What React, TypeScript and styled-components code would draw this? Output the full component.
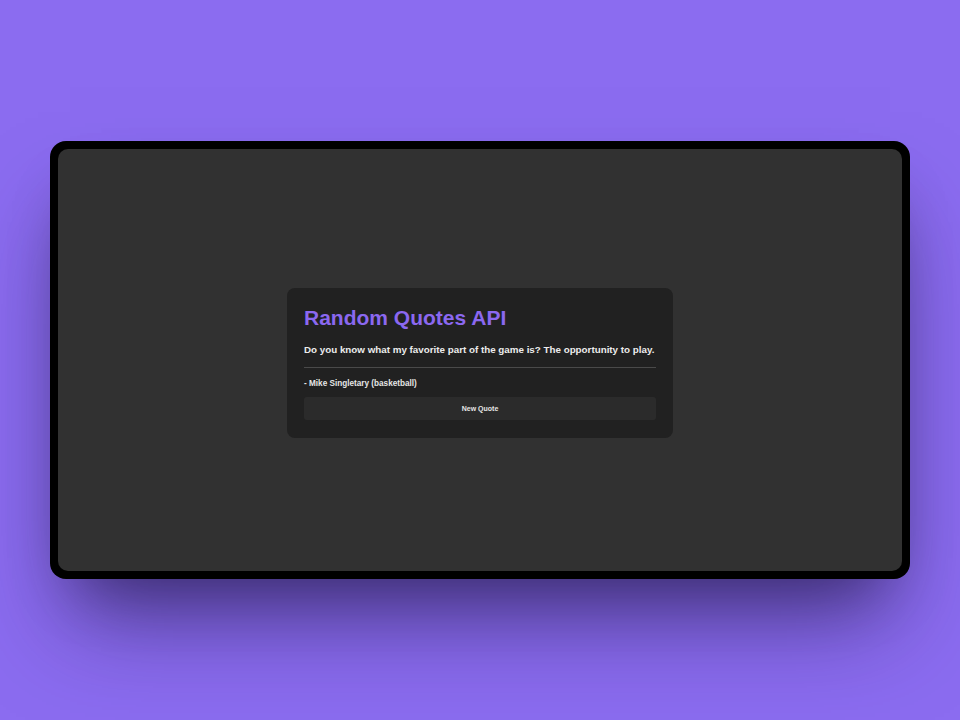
import React from "react";
import styled, { createGlobalStyle } from "styled-components";

const Global = createGlobalStyle`
  html, body { margin: 0; padding: 0; }
  body {
    background: #8b6cf0;
    font-family: "Liberation Sans", Arial, sans-serif;
  }
`;

const Page = styled.div`
  width: 960px;
  height: 720px;
  display: flex;
  align-items: center;
  justify-content: center;
`;

const Device = styled.div`
  width: 860px;
  height: 438px;
  box-sizing: border-box;
  background: #000;
  border-radius: 16px;
  padding: 8px;
  box-shadow: 0 60px 90px -20px rgba(30, 20, 70, 0.55),
    0 30px 60px -30px rgba(0, 0, 0, 0.4);
`;

const Screen = styled.div`
  width: 100%;
  height: 100%;
  background: #313131;
  border-radius: 10px;
  display: flex;
  align-items: center;
  justify-content: center;
`;

const Card = styled.div`
  width: 386px;
  box-sizing: border-box;
  background: #212121;
  border-radius: 8px;
  padding: 18px 17px 18px;
  margin-top: 5px;
`;

const Title = styled.h1`
  margin: 0 0 13px;
  font-size: 21px;
  line-height: 24px;
  font-weight: 700;
  color: #8b68f0;
`;

const Quote = styled.p`
  margin: 0;
  font-size: 9.8px;
  line-height: 14px;
  font-weight: 700;
  color: #ececec;
  white-space: nowrap;
`;

const Rule = styled.hr`
  border: none;
  border-top: 1px solid #4a4a4a;
  margin: 10px 0 11px;
`;

const Author = styled.p`
  margin: 0 0 8px;
  font-size: 8.2px;
  line-height: 10px;
  font-weight: 700;
  color: #e6e6e6;
`;

const Button = styled.button`
  display: block;
  width: 100%;
  height: 23px;
  border: none;
  border-radius: 3px;
  background: #2b2b2b;
  color: #e6e6e6;
  font-family: "Liberation Sans", Arial, sans-serif;
  font-size: 7px;
  font-weight: 700;
  cursor: pointer;
`;

export default function App() {
  return (
    <>
      <Global />
      <Page>
        <Device>
          <Screen>
            <Card>
              <Title>Random Quotes API</Title>
              <Quote>
                Do you know what my favorite part of the game is? The opportunity to play.
              </Quote>
              <Rule />
              <Author>- Mike Singletary (basketball)</Author>
              <Button>New Quote</Button>
            </Card>
          </Screen>
        </Device>
      </Page>
    </>
  );
}
